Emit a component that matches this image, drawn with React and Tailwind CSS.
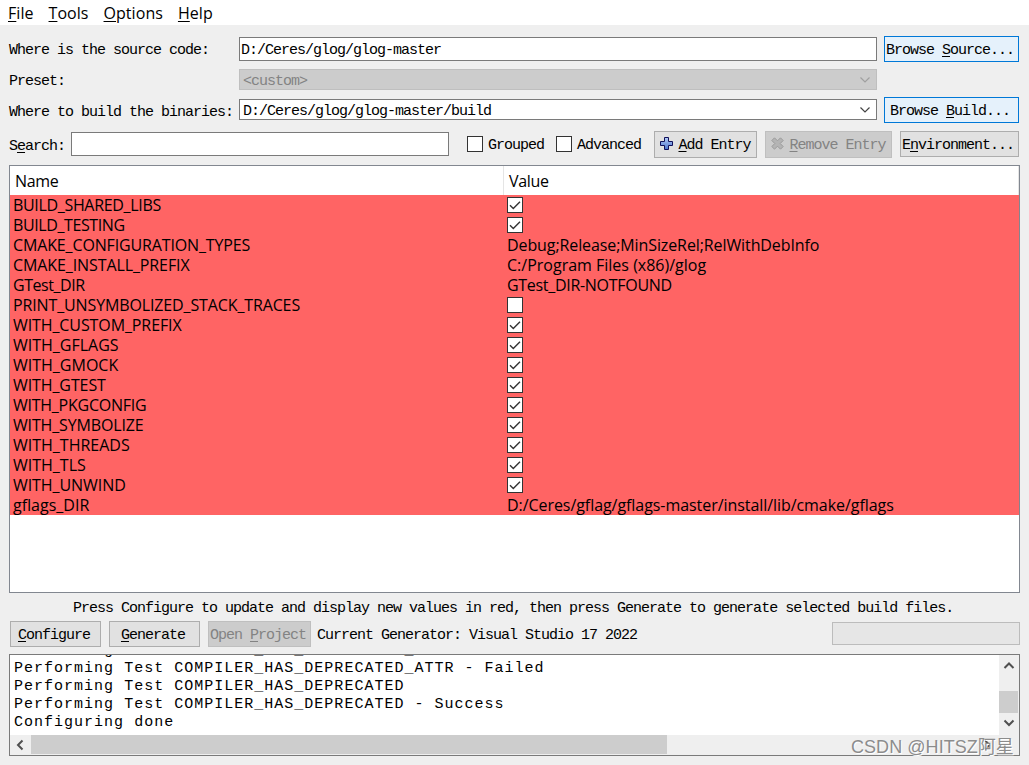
import clsx from "clsx";

const entries = [
  { name: "BUILD_SHARED_LIBS", checked: true, spacing: "tracking-[-0.33px]" },
  { name: "BUILD_TESTING", checked: true, spacing: "tracking-[-0.4px]" },
  {
    name: "CMAKE_CONFIGURATION_TYPES",
    value: "Debug;Release;MinSizeRel;RelWithDebInfo",
    spacing: "tracking-[-0.14px]",
    valueSpacing: "tracking-[-0.1px]",
  },
  { name: "CMAKE_INSTALL_PREFIX", value: "C:/Program Files (x86)/glog", spacing: "tracking-[-0.1px]" },
  {
    name: "GTest_DIR",
    value: "GTest_DIR-NOTFOUND",
    spacing: "tracking-[-0.45px]",
    valueSpacing: "tracking-[-0.3px]",
  },
  { name: "PRINT_UNSYMBOLIZED_STACK_TRACES", checked: false, spacing: "tracking-[-0.13px]" },
  { name: "WITH_CUSTOM_PREFIX", checked: true, spacing: "tracking-[-0.1px]" },
  { name: "WITH_GFLAGS", checked: true },
  { name: "WITH_GMOCK", checked: true },
  { name: "WITH_GTEST", checked: true, spacing: "tracking-[-0.1px]" },
  { name: "WITH_PKGCONFIG", checked: true, spacing: "tracking-[-0.25px]" },
  { name: "WITH_SYMBOLIZE", checked: true, spacing: "tracking-[-0.15px]" },
  { name: "WITH_THREADS", checked: true },
  { name: "WITH_TLS", checked: true },
  { name: "WITH_UNWIND", checked: true, spacing: "tracking-[-0.07px]" },
  {
    name: "gflags_DIR",
    value: "D:/Ceres/gflag/gflags-master/install/lib/cmake/gflags",
    valueSpacing: "tracking-[-0.06px]",
  },
];

const log = [
  "Performing Test COMPILER_HAS_DEPRECATED_ATTR",
  "Performing Test COMPILER_HAS_DEPRECATED_ATTR - Failed",
  "Performing Test COMPILER_HAS_DEPRECATED",
  "Performing Test COMPILER_HAS_DEPRECATED - Success",
  "Configuring done",
];

// "&" marks the mnemonic letter, as in Qt labels
function Label({ text }) {
  const i = text.indexOf("&");
  if (i < 0) return <span>{text}</span>;
  return (
    <span>
      {text.slice(0, i)}
      <span className="underline decoration-1 underline-offset-2">{text[i + 1]}</span>
      {text.slice(i + 2)}
    </span>
  );
}

function Button({ text, className, disabled, active, children }) {
  return (
    <button
      disabled={disabled}
      className={clsx(
        "flex shrink-0 items-center justify-center border pt-[3px] pr-[3px] whitespace-pre",
        active && "border-[#0078d7] bg-[#e5f1fb]",
        disabled && "border-[#bfbfbf] bg-[#cccccc] text-[#838383]",
        !active && !disabled && "border-[#adadad] bg-[#e1e1e1]",
        className
      )}
    >
      {children}
      <Label text={text} />
    </button>
  );
}

function Checkbox({ checked }) {
  return (
    <span className="block size-4 shrink-0 border border-[#333333] bg-white">
      {checked && (
        <svg viewBox="0 0 14 14" className="block size-3.5" fill="none" stroke="#333333" strokeWidth="1.4">
          <path d="M2 7.2 L5.3 10.5 L12 3.7" />
        </svg>
      )}
    </span>
  );
}

const arrows = {
  up: "M1.5 9 L6 4.5 L10.5 9",
  down: "M1.5 3.5 L6 8 L10.5 3.5",
  left: "M8.5 1.5 L4 6 L8.5 10.5",
  right: "M4 1.5 L8.5 6 L4 10.5",
};

function Arrow({ dir, color = "#505050", width = 2 }) {
  return (
    <svg viewBox="0 0 12 12" className="block size-3 shrink-0" fill="none" stroke={color} strokeWidth={width}>
      <path d={arrows[dir]} />
    </svg>
  );
}

function PlusIcon() {
  return (
    <svg viewBox="0 0 13 13" className="mr-[5px] mb-[5px] ml-[3px] block size-[13px] shrink-0">
      <defs>
        <linearGradient id="plus" x1="0" y1="0" x2="0" y2="1">
          <stop offset="0" stopColor="#b4ccf8" />
          <stop offset="1" stopColor="#4a72cc" />
        </linearGradient>
      </defs>
      <path
        d="M4.5 .5 H8.5 V4.5 H12.5 V8.5 H8.5 V12.5 H4.5 V8.5 H.5 V4.5 H4.5 Z"
        fill="url(#plus)"
        stroke="#10105a"
      />
    </svg>
  );
}

function CrossIcon() {
  return (
    <svg viewBox="0 0 13 13" className="mr-[5px] mb-[5px] ml-[3px] block size-[13px] shrink-0">
      <path
        d="M3.5 .8 L6.5 3.8 L9.5 .8 L12.2 3.5 L9.2 6.5 L12.2 9.5 L9.5 12.2 L6.5 9.2 L3.5 12.2 L.8 9.5 L3.8 6.5 L.8 3.5 Z"
        fill="#b4b4b4"
        stroke="#9c9c9c"
      />
    </svg>
  );
}

export default function App() {
  return (
    <div className="relative flex h-[765px] w-[1029px] flex-col overflow-hidden bg-[#efefef] font-['Liberation_Mono',monospace] text-[15px] leading-5 tracking-[-1px] text-black">
      <nav className="flex h-[25px] shrink-0 items-center gap-[15px] bg-white pt-px pl-2 font-['Open_Sans',sans-serif] text-[16px] tracking-[0.05px]">
        <Label text="&File" />
        <Label text="&Tools" />
        <Label text="&Options" />
        <Label text="&Help" />
      </nav>

      {/* Paths */}
      <div className="mt-[11px] flex h-[26px] shrink-0 items-center pl-[9px]">
        <span className="w-[230px] pt-[4px]">Where is the source code:</span>
        <div className="flex h-6 w-[638px] items-center border border-[#7a7a7a] bg-white pt-[4px] pl-px">
          D:/Ceres/glog/glog-master
        </div>
        <Button text="Browse &Source..." active className="ml-[7px] h-[26px] w-[135px]" />
      </div>
      <div className="mt-[7px] flex h-[21px] shrink-0 items-center pl-[9px]">
        <span className="w-[230px] pt-[4px]">Preset:</span>
        <div className="flex h-[21px] w-[638px] items-center justify-between border border-[#bfbfbf] bg-[#cccccc] pr-[5px] pl-[3px] text-[#838383]">
          <span className="pt-[4px]">&lt;custom&gt;</span>
          <Arrow dir="down" color="#a0a0a0" width={1.2} />
        </div>
      </div>
      <div className="mt-[7px] flex h-[26px] shrink-0 items-center pl-[9px]">
        <span className="w-[230px] pt-[5px]">Where to build the binaries:</span>
        <div className="mb-px flex h-[21px] w-[638px] items-center justify-between border border-[#7a7a7a] bg-white pr-[5px] pl-[3px]">
          <span className="pt-[4px]">D:/Ceres/glog/glog-master/build</span>
          <Arrow dir="down" color="#444444" width={1.2} />
        </div>
        <Button text="Browse &Build..." active className="ml-[7px] h-[26px] w-[135px]" />
      </div>

      {/* Search and entry actions */}
      <div className="mt-2 flex h-[27px] shrink-0 items-center pl-[9px]">
        <span className="w-[62px] pt-[4px]">
          <Label text="S&earch:" />
        </span>
        <div className="mb-px h-6 w-[378px] border border-[#7a7a7a] bg-white" />
        <div className="mb-px ml-[18px] flex w-[89px] items-center gap-[5px]">
          <Checkbox />
          <span className="pt-[4px]">Grouped</span>
        </div>
        <div className="mb-px flex w-[98px] items-center gap-[5px]">
          <Checkbox />
          <span className="pt-[4px]">Advanced</span>
        </div>
        <Button text="&Add Entry" className="h-[27px] w-[103px]">
          <PlusIcon />
        </Button>
        <Button text="&Remove Entry" disabled className="ml-2 h-[27px] w-[127px]">
          <CrossIcon />
        </Button>
        <Button text="E&nvironment..." className="mb-px ml-2 h-[26px] w-[119px]" />
      </div>

      {/* Cache entries */}
      <div className="mt-[7px] ml-[9px] h-[428px] w-[1011px] shrink-0 border border-[#828790] bg-white font-['Open_Sans',sans-serif] text-[16px] tracking-normal">
        <div className="flex h-[29px] items-center tracking-[-0.35px]">
          <div className="flex h-full w-[494px] items-center border-r border-[#e5e5e5] pl-[5px]">Name</div>
          <div className="flex h-full flex-1 items-center border-r border-[#e5e5e5] pl-[5px]">Value</div>
        </div>
        {entries.map((entry) => (
          <div key={entry.name} className="flex h-5 items-center bg-[#ff6464] whitespace-pre">
            <div className="w-[497px] pl-[3px]">
              <span className={entry.spacing}>{entry.name}</span>
            </div>
            {entry.value ? (
              <span className={entry.valueSpacing}>{entry.value}</span>
            ) : (
              <Checkbox checked={entry.checked} />
            )}
          </div>
        ))}
      </div>

      <p className="mt-[6px] ml-[73px] shrink-0">
        Press Configure to update and display new values in red, then press Generate to generate selected build files.
      </p>

      <div className="mt-0.5 flex h-[26px] shrink-0 items-center pl-[10px]">
        <Button text="&Configure" className="h-[26px] w-[91px]" />
        <Button text="&Generate" className="ml-2 h-[26px] w-[91px]" />
        <Button text="Open &Project" disabled className="ml-2 h-[26px] w-[103px]" />
        <span className="ml-[6px] w-[515px] pt-[4px]">Current Generator: Visual Studio 17 2022</span>
        <div className="mb-[2px] h-[23px] w-[188px] border border-[#bcbcbc] bg-[#e6e6e6]" />
      </div>

      {/* Output log */}
      <div className="mt-[7px] ml-[9px] flex h-[102px] w-[1011px] shrink-0 flex-col border border-[#7a7a7a] bg-[#efefef]">
        <div className="flex h-20">
          <div className="flex w-[989px] flex-col justify-end overflow-hidden bg-white pb-[3px] pl-1 leading-[18px] tracking-[1.01px]">
            {log.map((line) => (
              <div key={line} className="h-[18px] shrink-0 whitespace-pre">
                {line}
              </div>
            ))}
          </div>
          <div className="flex w-[19px] flex-col items-center">
            <div className="flex h-9 pt-1">
              <Arrow dir="up" />
            </div>
            <div className="h-[22px] w-full bg-[#cdcdcd]" />
            <div className="pt-1">
              <Arrow dir="down" />
            </div>
          </div>
        </div>
        <div className="flex h-[19px] items-center">
          <div className="flex w-[19px] justify-center">
            <Arrow dir="left" />
          </div>
          <div className="ml-0.5 h-full w-[636px] bg-[#cdcdcd]" />
          <div className="ml-[308px] flex w-6 justify-center">
            <Arrow dir="right" />
          </div>
        </div>
      </div>

      <div className="absolute top-[735px] left-[851px] font-['Liberation_Sans','Noto_Sans_CJK_SC',sans-serif] text-[18px] leading-6 tracking-[0.05px] whitespace-nowrap text-[#8c8c8c] [text-shadow:1px_1px_0_#ffffff]">
        CSDN @HITSZ阿星
      </div>
    </div>
  );
}
